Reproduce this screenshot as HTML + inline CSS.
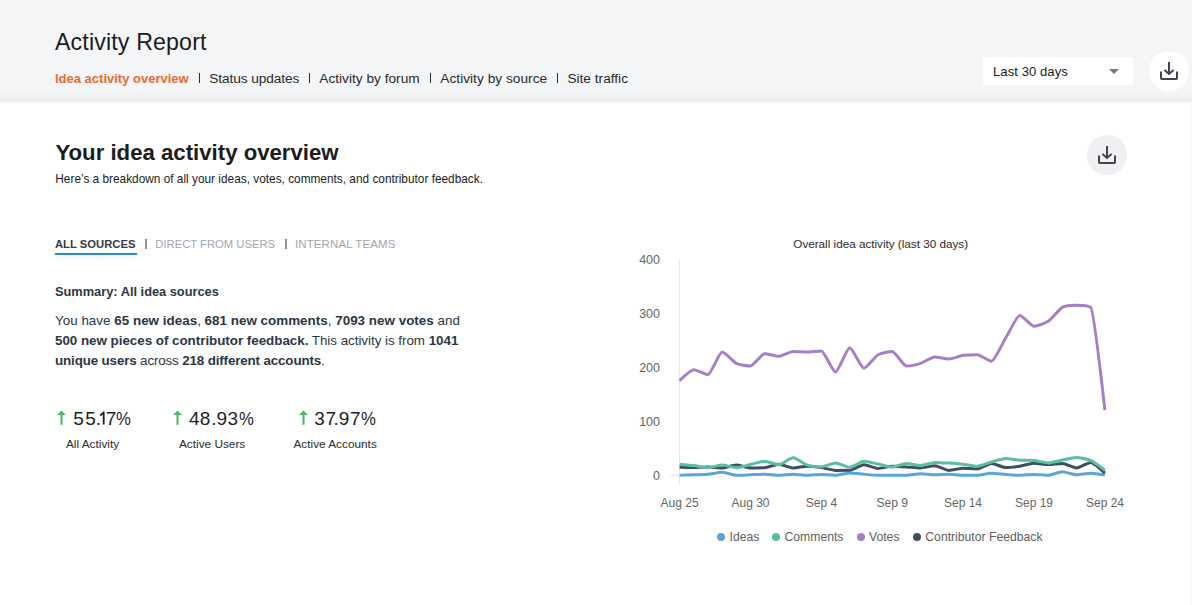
<!DOCTYPE html>
<html><head><meta charset="utf-8">
<style>
html,body{margin:0;padding:0;}
body{width:1192px;height:605px;overflow:hidden;position:relative;background:#f4f5f7;font-family:"Liberation Sans",sans-serif;}
.a{position:absolute;white-space:nowrap;}
#shade{position:absolute;left:0;top:92px;width:1192px;height:11px;background:linear-gradient(to bottom,rgba(0,0,0,0) 0%,rgba(20,30,20,0.012) 30%,rgba(10,10,20,0.035) 80%,rgba(0,0,0,0.008) 82%,rgba(0,0,0,0) 100%);}
#panel{position:absolute;left:0;top:103px;width:1191px;height:520px;background:#fff;}
.nav{font-size:13.7px;line-height:13.7px;color:#2a2a2a;top:72.1px;}
.sep{position:absolute;top:73px;width:1px;height:10px;background:#2a2a2a;}
.tab{font-size:11.5px;line-height:11.5px;top:238.7px;}
.tsep{position:absolute;top:239px;width:2px;height:10px;background:#8c8f99;}
.body{font-size:13.4px;line-height:20px;color:#2b3746;}
.body b{font-weight:bold;}
.num{font-size:19px;line-height:19px;top:408.7px;color:#1f1f1f;}
.lab{font-size:11.8px;line-height:11.8px;top:438.8px;color:#2a2a2a;}
.ylab{font-size:12.5px;line-height:12.5px;color:#666;text-align:right;width:40px;}
.xlab{font-size:12px;line-height:12px;color:#666;text-align:center;width:80px;top:497.2px;}
.leg{font-size:12.2px;line-height:12.2px;color:#5e5e5e;top:530.9px;}
.dot{position:absolute;width:8px;height:8px;border-radius:50%;top:533px;}
.circ{position:absolute;width:40px;height:40px;border-radius:50%;}
</style></head><body>
<div id="shade"></div>
<div class="a" style="left:55px;top:31.2px;font-size:23.2px;line-height:23.2px;letter-spacing:0.14px;color:#1c1c1c;">Activity Report</div>
<div class="a nav" style="left:55px;font-weight:bold;font-size:13px;line-height:13px;top:71.9px;color:#ec6b35;">Idea activity overview</div>
<div class="sep" style="left:199px"></div>
<div class="a nav" style="left:209.3px;letter-spacing:-0.1px;">Status updates</div>
<div class="sep" style="left:309px"></div>
<div class="a nav" style="left:319.3px;letter-spacing:0px;">Activity by forum</div>
<div class="sep" style="left:430px"></div>
<div class="a nav" style="left:440.3px;letter-spacing:0.02px;">Activity by source</div>
<div class="sep" style="left:557px"></div>
<div class="a nav" style="left:567.4px;letter-spacing:0px;">Site traffic</div>

<div class="a" style="left:983px;top:57px;width:150px;height:28.4px;background:#fff;"></div>
<div class="a" style="left:993px;top:65.2px;font-size:13.1px;line-height:13.1px;letter-spacing:0.05px;color:#1c1c1c;">Last 30 days</div>
<svg class="a" style="left:1109px;top:69px" width="10" height="5"><path d="M0 0H10L5 5Z" fill="#7a7a7a"/></svg>
<div class="circ" style="left:1149px;top:51px;background:#fff;"></div>
<svg class="a" style="left:1149px;top:51px" width="40" height="40"><g fill="none" stroke="#42444f" stroke-width="2"><path d="M20 11V22.5"/><path d="M15.4 18.9L20 23L24.6 18.9"/><path d="M12 20.5V27.2Q12 28 12.8 28H27.2Q28 28 28 27.2V20.5"/></g></svg>

<div id="panel"></div>
<div class="a" style="left:55.4px;top:141.5px;font-size:22.2px;line-height:22.2px;font-weight:bold;color:#1c1c1c;">Your idea activity overview</div>
<div class="a" style="left:55.3px;top:173.6px;font-size:11.85px;line-height:11.85px;color:#1c1c1c;">Here’s a breakdown of all your ideas, votes, comments, and contributor feedback.</div>
<div class="circ" style="left:1087px;top:135px;background:#f0f0f2;"></div>
<svg class="a" style="left:1087px;top:135px" width="40" height="40"><g fill="none" stroke="#42444f" stroke-width="2"><path d="M20 11V22.5"/><path d="M15.4 18.9L20 23L24.6 18.9"/><path d="M12 20.5V27.2Q12 28 12.8 28H27.2Q28 28 28 27.2V20.5"/></g></svg>

<div class="a tab" style="left:55px;font-weight:bold;font-size:11.25px;color:#373a47;">ALL SOURCES</div>
<div class="a" style="left:55px;top:253px;width:82px;height:2px;background:#2b8ad6;box-shadow:0 3px 4px rgba(0,0,0,0.07);"></div>
<div class="tsep" style="left:145px"></div>
<div class="a tab" style="left:155.3px;font-size:11.25px;color:#a3a6b0;">DIRECT FROM USERS</div>
<div class="tsep" style="left:285px"></div>
<div class="a tab" style="left:295px;color:#a3a6b0;letter-spacing:0.1px;">INTERNAL TEAMS</div>

<div class="a" style="left:55px;top:286.2px;font-size:12.8px;line-height:12.8px;font-weight:bold;color:#2b3746;">Summary: All idea sources</div>
<div class="a body" style="left:55px;top:311.2px;"><span style="letter-spacing:0.02px">You have <b>65 new ideas</b>, <b>681 new comments</b>, <b>7093 new votes</b> and</span><br><span style="letter-spacing:-0.03px"><b>500 new pieces of contributor feedback.</b> This activity is from <b>1041</b></span><br><span style="letter-spacing:-0.15px"><b>unique users</b> across <b>218 different accounts</b>.</span></div>

<svg class="a" style="left:56px;top:410px" width="11" height="16"><path d="M5.5 4V14.8" stroke="#50b565" stroke-width="2.1"/><path d="M1.1 5.1L5.5 0.5L9.9 5.1Z" fill="#50b565"/></svg>
<div class="a num" style="left:0;"><span style="position:absolute;left:73.3px;">5</span><span style="position:absolute;left:85.2px;">5</span><span style="position:absolute;left:95.8px;">.</span><span style="position:absolute;left:105.8px;">7</span><span style="position:absolute;left:115.45px;transform:scaleX(0.88);transform-origin:8.45px 50%;">%</span></div><svg class="a" style="left:98px;top:410px" width="8" height="16"><path d="M2.2 5.5L5.7 2.3V14.6" fill="none" stroke="#1f1f1f" stroke-width="1.8" stroke-linejoin="round"/></svg>
<div class="a lab" style="left:66px;">All Activity</div>
<svg class="a" style="left:172px;top:410px" width="11" height="16"><path d="M5.5 4V14.8" stroke="#50b565" stroke-width="2.1"/><path d="M1.1 5.1L5.5 0.5L9.9 5.1Z" fill="#50b565"/></svg>
<div class="a num" style="left:0;"><span style="position:absolute;left:188.95px;">4</span><span style="position:absolute;left:199.7px;">8</span><span style="position:absolute;left:211.2px;">.</span><span style="position:absolute;left:216.5px;">9</span><span style="position:absolute;left:227.6px;">3</span><span style="position:absolute;left:238.1px;transform:scaleX(0.88);transform-origin:8.45px 50%;">%</span></div>
<div class="a lab" style="left:179px;">Active Users</div>
<svg class="a" style="left:297.5px;top:410px" width="11" height="16"><path d="M5.5 4V14.8" stroke="#50b565" stroke-width="2.1"/><path d="M1.1 5.1L5.5 0.5L9.9 5.1Z" fill="#50b565"/></svg>
<div class="a num" style="left:0;"><span style="position:absolute;left:314.25px;">3</span><span style="position:absolute;left:325.5px;">7</span><span style="position:absolute;left:333.55px;">.</span><span style="position:absolute;left:338.7px;">9</span><span style="position:absolute;left:350.0px;">7</span><span style="position:absolute;left:359.6px;transform:scaleX(0.88);transform-origin:8.45px 50%;">%</span></div>
<div class="a lab" style="left:293.5px;">Active Accounts</div>

<div class="a" style="left:793.3px;top:237.6px;font-size:11.7px;line-height:11.7px;color:#2a2a2a;">Overall idea activity (last 30 days)</div>
<div class="a ylab" style="left:620px;top:253.5px;">400</div>
<div class="a ylab" style="left:620px;top:307.5px;">300</div>
<div class="a ylab" style="left:620px;top:361.5px;">200</div>
<div class="a ylab" style="left:620px;top:415.5px;">100</div>
<div class="a ylab" style="left:620px;top:469.5px;">0</div>
<div class="a xlab" style="left:639.6px;">Aug 25</div>
<div class="a xlab" style="left:710.5px;">Aug 30</div>
<div class="a xlab" style="left:781.4px;">Sep 4</div>
<div class="a xlab" style="left:852.3px;">Sep 9</div>
<div class="a xlab" style="left:923px;">Sep 14</div>
<div class="a xlab" style="left:994px;">Sep 19</div>
<div class="a xlab" style="left:1065px;">Sep 24</div>

<svg class="a" style="left:0;top:0" width="1192" height="605">
<path d="M679.5 260V485" stroke="#e6e6ee" stroke-width="1"/>
<path d="M670 475.5H680" stroke="#e6e6ee" stroke-width="1"/>
<g fill="none" stroke-width="3" stroke-linejoin="round" stroke-linecap="butt">
<path d="M679.60 475.30 C679.60 475.30 690.94 474.87 693.78 474.76 C696.61 474.65 705.12 474.47 707.95 474.22 C710.79 473.98 719.29 472.29 722.13 472.29 C724.97 472.29 733.47 475.30 736.31 475.30 C739.14 475.30 747.65 474.87 750.48 474.76 C753.32 474.65 761.82 474.22 764.66 474.22 C767.50 474.22 776.00 475.30 778.84 475.30 C781.67 475.30 790.18 474.22 793.01 474.22 C795.85 474.22 804.35 475.30 807.19 475.30 C810.03 475.30 818.53 474.38 821.37 474.38 C824.20 474.38 832.71 475.30 835.54 475.30 C838.38 475.30 846.88 472.88 849.72 472.88 C852.56 472.88 861.06 473.98 863.90 474.22 C866.73 474.47 875.24 475.30 878.07 475.30 C880.91 475.30 889.41 475.30 892.25 475.30 C895.09 475.30 903.59 475.30 906.43 475.30 C909.26 475.30 917.77 473.69 920.60 473.69 C923.44 473.69 931.94 474.76 934.78 474.76 C937.62 474.76 946.12 474.22 948.96 474.22 C951.79 474.22 960.30 475.30 963.13 475.30 C965.97 475.30 974.47 475.30 977.31 475.30 C980.15 475.30 988.65 473.31 991.49 473.31 C994.32 473.31 1002.83 474.29 1005.66 474.49 C1008.50 474.69 1017.00 475.30 1019.84 475.30 C1022.68 475.30 1031.18 474.38 1034.02 474.38 C1036.85 474.38 1045.36 475.30 1048.19 475.30 C1051.03 475.30 1059.53 471.69 1062.37 471.69 C1065.21 471.69 1073.71 474.76 1076.55 474.76 C1079.38 474.76 1087.89 473.15 1090.72 473.15 C1093.56 473.15 1104.90 475.03 1104.90 475.03" stroke="#5aa5e0"/>
<path d="M679.60 467.23 C679.60 467.23 690.94 467.50 693.78 467.50 C696.61 467.50 705.12 467.01 707.95 467.01 C710.79 467.01 719.29 467.98 722.13 467.98 C724.97 467.98 733.47 465.07 736.31 465.07 C739.14 465.07 747.65 467.93 750.48 467.93 C753.32 467.93 761.82 467.93 764.66 467.76 C767.50 467.60 776.00 464.21 778.84 464.21 C781.67 464.21 790.18 467.98 793.01 467.98 C795.85 467.98 804.35 466.15 807.19 466.15 C810.03 466.15 818.53 467.18 821.37 467.60 C824.20 468.03 832.71 470.40 835.54 470.40 C838.38 470.40 846.88 470.40 849.72 470.29 C852.56 470.19 861.06 464.80 863.90 464.80 C866.73 464.80 875.24 468.41 878.07 468.41 C880.91 468.41 889.41 466.31 892.25 466.31 C895.09 466.31 903.59 466.74 906.43 466.90 C909.26 467.07 917.77 467.98 920.60 467.98 C923.44 467.98 931.94 465.72 934.78 465.72 C937.62 465.72 946.12 470.46 948.96 470.46 C951.79 470.46 960.30 468.20 963.13 468.20 C965.97 468.20 974.47 468.84 977.31 468.84 C980.15 468.84 988.65 463.46 991.49 463.46 C994.32 463.46 1002.83 467.60 1005.66 467.60 C1008.50 467.60 1017.00 466.58 1019.84 466.15 C1022.68 465.72 1031.18 463.30 1034.02 463.30 C1036.85 463.30 1045.36 464.54 1048.19 464.54 C1051.03 464.54 1059.53 463.46 1062.37 463.46 C1065.21 463.46 1073.71 467.93 1076.55 467.93 C1079.38 467.93 1087.89 462.38 1090.72 462.38 C1093.56 462.38 1104.90 473.15 1104.90 473.15" stroke="#3f4f5f"/>
<path d="M679.60 464.54 C679.60 464.54 690.94 465.29 693.78 465.61 C696.61 465.93 705.12 467.76 707.95 467.76 C710.79 467.76 719.29 465.07 722.13 465.07 C724.97 465.07 733.47 467.76 736.31 467.76 C739.14 467.76 747.65 465.18 750.48 464.54 C753.32 463.89 761.82 461.31 764.66 461.31 C767.50 461.31 776.00 464.80 778.84 464.80 C781.67 464.80 790.18 457.81 793.01 457.81 C795.85 457.81 804.35 464.16 807.19 465.07 C810.03 465.99 818.53 466.96 821.37 466.96 C824.20 466.96 832.71 462.92 835.54 462.92 C838.38 462.92 846.88 467.23 849.72 467.23 C852.56 467.23 861.06 461.31 863.90 461.31 C866.73 461.31 875.24 463.42 878.07 464.00 C880.91 464.57 889.41 467.06 892.25 467.06 C895.09 467.06 903.59 463.46 906.43 463.46 C909.26 463.46 917.77 465.40 920.60 465.40 C923.44 465.40 931.94 462.38 934.78 462.38 C937.62 462.38 946.12 462.90 948.96 463.08 C951.79 463.26 960.30 463.91 963.13 464.21 C965.97 464.52 974.47 466.15 977.31 466.15 C980.15 466.15 988.65 462.76 991.49 462.01 C994.32 461.25 1002.83 458.61 1005.66 458.61 C1008.50 458.61 1017.00 460.12 1019.84 460.28 C1022.68 460.44 1031.18 460.28 1034.02 460.44 C1036.85 460.61 1045.36 462.97 1048.19 462.97 C1051.03 462.97 1059.53 460.56 1062.37 460.01 C1065.21 459.47 1073.71 457.54 1076.55 457.54 C1079.38 457.54 1087.89 459.13 1090.72 460.39 C1093.56 461.66 1104.90 470.19 1104.90 470.19" stroke="#5bbda6"/>
<path d="M679.60 380.57 C679.60 380.57 690.94 369.80 693.78 369.80 C696.61 369.80 705.12 374.65 707.95 374.65 C710.79 374.65 719.29 352.04 722.13 352.04 C724.97 352.04 733.47 361.94 736.31 363.34 C739.14 364.74 747.65 366.04 750.48 366.04 C753.32 366.04 761.82 353.66 764.66 353.66 C767.50 353.66 776.00 356.35 778.84 356.35 C781.67 356.35 790.18 351.50 793.01 351.50 C795.85 351.50 804.35 352.04 807.19 352.04 C810.03 352.04 818.53 350.96 821.37 350.96 C824.20 350.96 832.71 371.96 835.54 371.96 C838.38 371.96 846.88 347.73 849.72 347.73 C852.56 347.73 861.06 368.19 863.90 368.19 C866.73 368.19 875.24 356.40 878.07 354.73 C880.91 353.06 889.41 351.50 892.25 351.50 C895.09 351.50 903.59 366.04 906.43 366.04 C909.26 366.04 917.77 364.26 920.60 363.34 C923.44 362.43 931.94 356.88 934.78 356.88 C937.62 356.88 946.12 359.04 948.96 359.04 C951.79 359.04 960.30 355.70 963.13 355.27 C965.97 354.84 974.47 354.73 977.31 354.73 C980.15 354.73 988.65 361.19 991.49 361.19 C994.32 361.19 1002.83 342.62 1005.66 338.05 C1008.50 333.47 1017.00 315.44 1019.84 315.44 C1022.68 315.44 1031.18 326.20 1034.02 326.20 C1036.85 326.20 1045.36 323.24 1048.19 321.36 C1051.03 319.48 1059.53 308.98 1062.37 307.37 C1065.21 305.75 1073.71 305.21 1076.55 305.21 C1079.38 305.21 1087.89 305.21 1090.72 307.37 C1093.56 309.52 1104.90 410.17 1104.90 410.17" stroke="#a67fca"/>
</g>
</svg>

<div class="dot" style="left:716.8px;background:#5aa5e0;"></div>
<div class="a leg" style="left:729.5px;">Ideas</div>
<div class="dot" style="left:772px;background:#5bbda6;"></div>
<div class="a leg" style="left:784.5px;">Comments</div>
<div class="dot" style="left:857px;background:#a67fca;"></div>
<div class="a leg" style="left:869px;">Votes</div>
<div class="dot" style="left:912.6px;background:#3f4f5f;"></div>
<div class="a leg" style="left:925.3px;">Contributor Feedback</div>
</body></html>
